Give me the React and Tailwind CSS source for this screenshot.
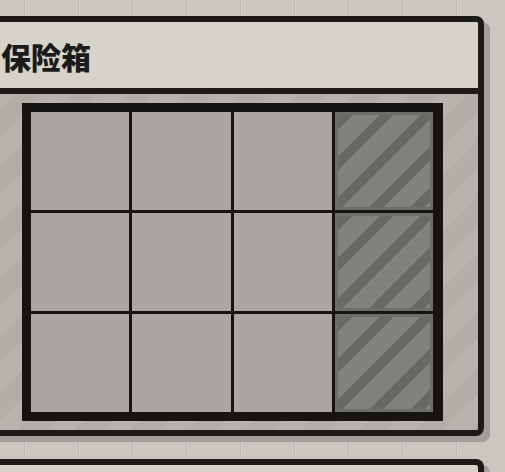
export default function App() {
  const slots = Array.from({ length: 12 }, (_, i) => ({ id: i, locked: i % 4 === 3 }));

  return (
    <div
      className="w-[505px] h-[472px] overflow-hidden pt-[16px] bg-[#cac6c0] bg-[repeating-linear-gradient(90deg,transparent_0_24px,rgba(0,0,0,0.07)_24px_25px,rgba(255,255,255,0.18)_25px_26px,transparent_26px_54px)]"
      style={{ fontFamily: '"Noto Sans CJK SC", "Noto Sans", sans-serif' }}
    >
      {/* Safe panel */}
      <div className="ml-[-19px] w-[503px] border-[6px] border-[#1b1a18] rounded-r-[8px] shadow-[6px_6px_0_#a19e99] overflow-hidden">
        <div className="h-[72px] bg-[#d6d3cb] border-b-[6px] border-[#1b1a18] pl-[14px] flex items-center">
          <h2 className="text-[30px] leading-none font-black text-[#1c1b19] pt-[2px]">保险箱</h2>
        </div>
        <div className="bg-[#b6b1aa] bg-[repeating-linear-gradient(135deg,#b8b3ac_0_20px,#b2ada6_20px_40px)] pt-[9px] pb-[9px] flex justify-center">
          <div className="border-[9px] border-r-[10px] border-[#151412] bg-[#151412]">
            <div className="w-[402px] h-[300px] grid grid-cols-4 grid-rows-3 gap-[3px]">
              {slots.map((s) =>
                s.locked ? (
                  <div
                    key={s.id}
                    className="border-[3px] border-[#6f6d69] bg-[#83817d] bg-[repeating-linear-gradient(135deg,#6a6865_0_10px,#83817d_10px_29px)]"
                  />
                ) : (
                  <div key={s.id} className="bg-[#aaa7a2]" />
                )
              )}
            </div>
          </div>
        </div>
      </div>

      {/* Next panel */}
      <div className="mt-[23px] ml-[-19px] w-[503px] h-[40px] border-[6px] border-b-0 border-[#1b1a18] rounded-tr-[8px] bg-[#d6d3cb] shadow-[6px_6px_0_#a19e99]" />
    </div>
  );
}
